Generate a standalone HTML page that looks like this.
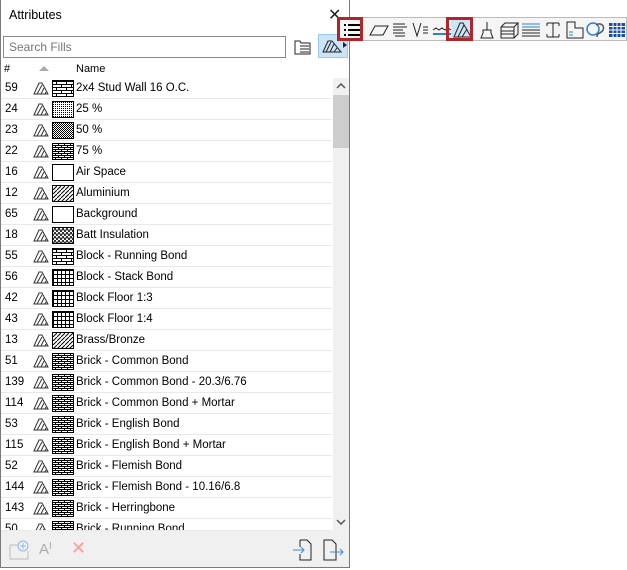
<!DOCTYPE html>
<html><head><meta charset="utf-8">
<style>
*{margin:0;padding:0;box-sizing:border-box}
body{width:627px;height:570px;background:#fff;position:relative;overflow:hidden;font-family:"Liberation Sans","DejaVu Sans",sans-serif;font-size:11px;color:#000}
#panel{position:absolute;left:0;top:0;width:350px;height:568px;background:#fff;border:1px solid #7a7a7a;border-top:none}
#title{position:absolute;left:8px;top:8px;font-size:12.5px}
#close{position:absolute;left:327px;top:5px;font-size:16px;color:#222}
#search{position:absolute;left:2px;top:36px;width:283px;height:22px;border:1px solid #8a8a8a;background:#fff;color:#777;font-size:12px;padding:3px 5px}
#bar{position:absolute;left:0;top:31px;width:348px;height:31px;background:#f0f0f0;z-index:-1}
.hd{position:absolute;top:62px;left:0;width:331px;height:16px;background:#fff;font-size:11px}
.row{position:absolute;left:0;width:331px;height:21px;border-bottom:1px solid #e8e8e8}
.row .n{position:absolute;left:4px;top:4px;font-size:11.5px}
.row .ic{position:absolute;left:32px;top:3px}
.row .sw{position:absolute;left:51px;top:2px;width:22px;height:17px;border:1px solid #000;overflow:hidden}
.row .t{position:absolute;left:75px;top:4px;font-size:11.5px}
#sb{position:absolute;left:332px;top:78px;width:16px;height:453px;background:#f0f0f0}
#thumb{position:absolute;left:332px;top:95px;width:16px;height:53px;background:#cdcdcd}
#foot{position:absolute;left:0;top:531px;width:348px;height:36px;background:#f0f0f0}
#tb{position:absolute;left:337px;top:17px;width:290px;height:24px;border:1px solid #bbb;background:#f5f5f5}
.tbi{position:absolute;top:2px;width:22px;height:20px}
.red{position:absolute;border:3px solid #b3232a}
</style></head><body>
<svg width="0" height="0" style="position:absolute">
<defs>
<pattern id="hat" width="4" height="4" patternUnits="userSpaceOnUse"><path d="M0 4L4 0" stroke="#000" stroke-width="1"/></pattern>
<pattern id="dot25" width="2" height="2" patternUnits="userSpaceOnUse"><rect width="1" height="1" fill="#000"/></pattern>
<pattern id="dot50" width="2" height="2" patternUnits="userSpaceOnUse"><rect width="1" height="1" fill="#000"/><rect x="1" y="1" width="1" height="1" fill="#000"/></pattern>
<pattern id="brick" width="6" height="4" patternUnits="userSpaceOnUse"><rect width="6" height="4" fill="#000"/><rect x="0" y="0" width="5" height="1" fill="#fff"/><rect x="3" y="2" width="5" height="1" fill="#fff"/><rect x="-3" y="2" width="5" height="1" fill="#fff"/></pattern>
<pattern id="block" width="10" height="6" patternUnits="userSpaceOnUse"><path d="M0 .5H10M0 3.5H10M3.5 0V3M8.5 3V6" stroke="#000" fill="none"/></pattern>
<pattern id="grid" width="4" height="4" patternUnits="userSpaceOnUse"><path d="M0 .5H4M.5 0V4" stroke="#000" fill="none"/></pattern>
<pattern id="zig" width="4" height="4" patternUnits="userSpaceOnUse"><path d="M0 4L2 0L4 4" stroke="#000" fill="none"/></pattern>
</defs></svg>

<div id="panel">
<div id="bar"></div>
<div id="title">Attributes</div>
<div id="close">✕</div>
<div id="search">Search Fills</div>
<svg style="position:absolute;left:293px;top:38px" width="18" height="17"><path d="M1 3h5l1 2h9v11H1z" fill="#fff" stroke="#222"/><path d="M6 8h9M6 11h9M6 14h9" stroke="#222"/></svg>
<div style="position:absolute;left:317px;top:34px;width:30px;height:24px;background:#cce4f7;border:1px solid #99c9ef"></div>
<svg style="position:absolute;left:321px;top:38px" width="26" height="16"><path d="M1 14L6 3h4l9 11z" fill="none" stroke="#222"/><path d="M4 14l5-10M8 14l4-8M12 14l3-4" stroke="#222"/><path d="M21 4l4 3-4 3z" fill="#222"/></svg>
<div class="hd"><span style="position:absolute;left:3px;top:1px">#</span><span style="position:absolute;left:38px;top:4px;width:0;height:0;border:5px solid transparent;border-bottom:5px solid #aaa;border-top:none"></span><span style="position:absolute;left:75px;top:1px">Name</span></div>
<div id="rows"></div>
<div id="sb"></div>
<div id="thumb"></div>
<svg style="position:absolute;left:335px;top:83px" width="10" height="6"><path d="M1 5l4-4 4 4" stroke="#555" fill="none" stroke-width="1.5"/></svg>
<svg style="position:absolute;left:335px;top:519px" width="10" height="6"><path d="M1 1l4 4 4-4" stroke="#555" fill="none" stroke-width="1.5"/></svg>
<div id="foot">
<svg style="position:absolute;left:8px;top:9px" width="20" height="20"><path d="M1 5h8M1 5v14h18v-8" stroke="#bbb" fill="none"/><circle cx="14" cy="6" r="5" fill="none" stroke="#8fb9e8"/><path d="M14 3v6M11 6h6" stroke="#8fb9e8"/></svg>
<span style="position:absolute;left:38px;top:10px;font-size:15px;color:#aaa">A<span style="font-size:10px;vertical-align:top">I</span></span>
<span style="position:absolute;left:70px;top:7px;font-size:18px;color:#f4a09a">✕</span>
<svg style="position:absolute;left:291px;top:8px" width="22" height="22"><path d="M8 1h7l4 4v16H8v-6M8 8V1" stroke="#222" fill="none"/><path d="M1 11h11M9 8l3 3-3 3" stroke="#3a8be0" fill="none"/></svg>
<svg style="position:absolute;left:322px;top:8px" width="22" height="22"><path d="M1 1h8l4 4v16H1z" stroke="#222" fill="none"/><path d="M7 13h13M17 10l3 3-3 3" stroke="#3a8be0" fill="none"/></svg>
</div>
</div>

<div id="tb">
<svg class="tbi" style="left:2px" viewBox="0 0 22 20"><path d="M4 5h2M8 5h12M4 10h2M8 10h12M4 15h2M8 15h12" stroke="#000" stroke-width="2"/></svg>
<svg class="tbi" style="left:30px" viewBox="0 0 22 20"><path d="M2 15l5-9h13l-5 9z" fill="none" stroke="#222"/></svg>
<svg class="tbi" style="left:51px" viewBox="0 0 22 20"><path d="M4 4h12M4 7h14M4 10h10M4 13h12M6 16h10" stroke="#222" fill="none"/></svg>
<svg class="tbi" style="left:72px" viewBox="0 0 22 20"><path d="M3 3l4 13 4-13M13 7h5M13 10h5M13 13h5" stroke="#222" fill="none"/></svg>
<svg class="tbi" style="left:93px" viewBox="0 0 22 20"><path d="M2 10l3-2 3 2 3-2 3 2 3-2 3 2" stroke="#222" fill="none"/><path d="M2 14h19" stroke="#2d7fd6" stroke-width="2"/></svg>
<div style="position:absolute;left:113px;top:0;width:22px;height:22px;background:#cce4f7"></div>
<svg class="tbi" style="left:114px" viewBox="0 0 22 20"><path d="M2 17L8 3h3l8 14z" fill="none" stroke="#222"/><path d="M6 17l6-12M10 17l5-8" stroke="#222"/></svg>
<svg class="tbi" style="left:138px" viewBox="0 0 22 20"><path d="M11 2v8M7 10h8v3l2 5H5l2-5z" stroke="#222" fill="none"/></svg>
<svg class="tbi" style="left:160px" viewBox="0 0 22 20"><path d="M3 7h13v11H3zM3 7l4-4h13l-4 4M16 18l4-4V3M3 11h13M3 14h13" stroke="#222" fill="none"/></svg>
<svg class="tbi" style="left:182px" viewBox="0 0 22 20"><path d="M2 4h18M2 7h18" stroke="#2d7fd6"/><path d="M2 10h18M2 13h18M2 16h18" stroke="#222"/></svg>
<svg class="tbi" style="left:204px" viewBox="0 0 22 20"><path d="M5 3h12M5 17h12M11 3v14M5 3v3M17 3v3M5 14v3M17 14v3" stroke="#222" fill="none"/></svg>
<svg class="tbi" style="left:226px" viewBox="0 0 22 20"><path d="M3 2h8v6h8v10H3z" stroke="#222" fill="none"/><path d="M5 12h4M5 15h4" stroke="#2d7fd6"/></svg>
<svg class="tbi" style="left:247px" viewBox="0 0 22 20"><circle cx="8" cy="9" r="6" fill="none" stroke="#2d7fd6" stroke-width="1.5"/><path d="M11 5c5-3 9 1 7 5-2 4-6 2-6 7" stroke="#555" fill="none" stroke-width="1.5"/></svg>
<svg class="tbi" style="left:268px" viewBox="0 0 22 20"><rect x="3" y="3" width="16" height="14" fill="#1a4fa0"/><path d="M3 6.5h16M3 10h16M3 13.5h16M7 3v14M11 3v14M15 3v14" stroke="#fff"/></svg>
</div>
<div class="red" style="left:337px;top:17px;width:26px;height:24px"></div>
<div class="red" style="left:446px;top:17px;width:27px;height:24px"></div>

<script>
var d=[["59","2x4 Stud Wall 16 O.C.","block"],["24","25 %","dot25"],["23","50 %","dot50"],["22","75 %","brick"],["16","Air Space",""],["12","Aluminium","hat"],["65","Background",""],["18","Batt Insulation","zig"],["55","Block - Running Bond","block"],["56","Block - Stack Bond","grid"],["42","Block Floor 1:3","grid"],["43","Block Floor 1:4","grid"],["13","Brass/Bronze","hat"],["51","Brick - Common Bond","brick"],["139","Brick - Common Bond - 20.3/6.76","brick"],["114","Brick - Common Bond + Mortar","brick"],["53","Brick - English Bond","brick"],["115","Brick - English Bond + Mortar","brick"],["52","Brick - Flemish Bond","brick"],["144","Brick - Flemish Bond - 10.16/6.8","brick"],["143","Brick - Herringbone","brick"],["50","Brick - Running Bond","brick"]];
var h="";
d.forEach(function(r,i){var y=78+i*21;if(y>531)return;
h+='<div class="row" style="top:'+y+'px;'+(y+21>531?'height:'+(531-y)+'px;overflow:hidden;':'')+'"><span class="n">'+r[0]+'</span><svg class="ic" width="16" height="14"><path d="M1 13L6 2h3l6 11z" fill="none" stroke="#333"/><path d="M4 13l5-9M8 13l3-6M12 13l1-2" stroke="#333"/></svg><div class="sw">'+(r[2]?'<svg width="22" height="17"><rect width="22" height="17" fill="url(#'+r[2]+')"/></svg>':'')+'</div><span class="t">'+r[1]+'</span></div>';});
document.getElementById("rows").innerHTML=h;
</script>
</body></html>
